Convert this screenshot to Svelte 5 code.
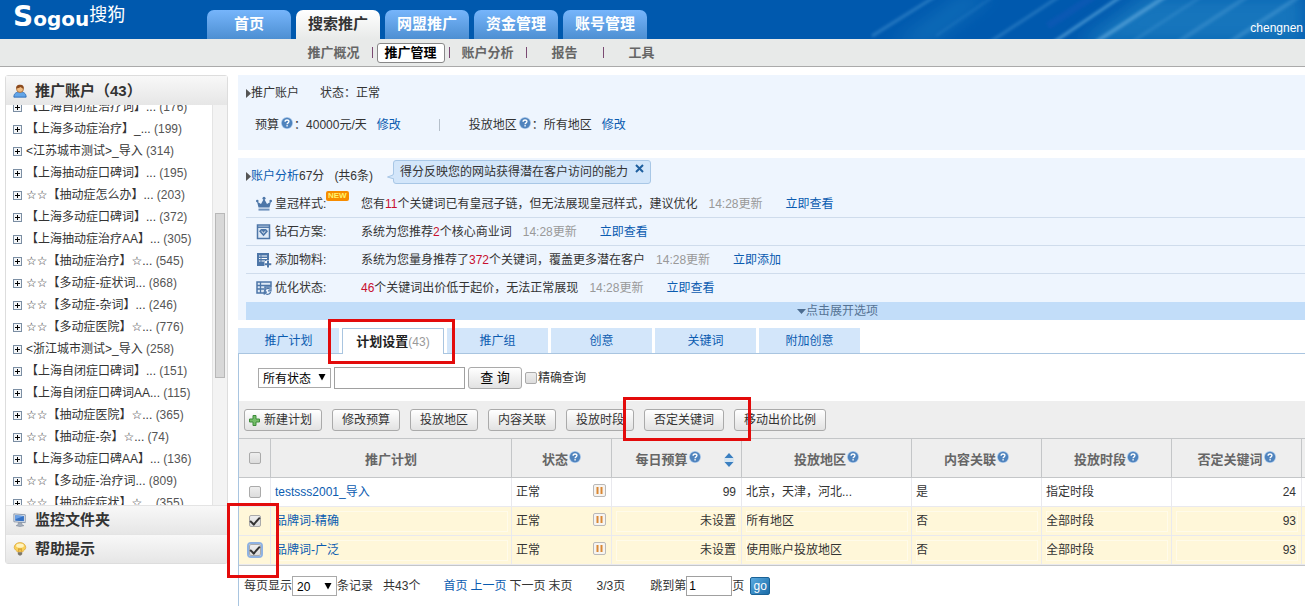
<script lang="ts">
  const mainTabs = ['首页', '搜索推广', '网盟推广', '资金管理', '账号管理'];
  const subTabs = ['推广概况', '推广管理', '账户分析', '报告', '工具'];

  const accounts = [
    { name: '【上海自闭症治疗词】...', count: 176 },
    { name: '【上海多动症治疗】_...', count: 199 },
    { name: '<江苏城市测试>_导入', count: 314 },
    { name: '【上海抽动症口碑词】...', count: 195 },
    { name: '☆☆【抽动症怎么办】...', count: 203 },
    { name: '【上海多动症口碑词】...', count: 372 },
    { name: '【上海抽动症治疗AA】...', count: 305 },
    { name: '☆☆【抽动症治疗】☆...', count: 545 },
    { name: '☆☆【多动症-症状词...', count: 868 },
    { name: '☆☆【多动症-杂词】...', count: 246 },
    { name: '☆☆【多动症医院】☆...', count: 776 },
    { name: '<浙江城市测试>_导入', count: 258 },
    { name: '【上海自闭症口碑词】...', count: 151 },
    { name: '【上海自闭症口碑词AA...', count: 115 },
    { name: '☆☆【抽动症医院】☆...', count: 365 },
    { name: '☆☆【抽动症-杂】☆...', count: 74 },
    { name: '【上海多动症口碑AA】...', count: 136 },
    { name: '☆☆【多动症-治疗词...', count: 809 },
    { name: '☆☆【抽动症症状】☆...', count: 355 },
  ];

  const tips = [
    { icon: 'crown', label: '皇冠样式:', isNew: true, before: '您有', num: 11, after: '个关键词已有皇冠子链，但无法展现皇冠样式，建议优化', link: '立即查看' },
    { icon: 'diamond', label: '钻石方案:', isNew: false, before: '系统为您推荐', num: 2, after: '个核心商业词', link: '立即查看' },
    { icon: 'add', label: '添加物料:', isNew: false, before: '系统为您量身推荐了', num: 372, after: '个关键词，覆盖更多潜在客户', link: '立即添加' },
    { icon: 'state', label: '优化状态:', isNew: false, before: '', num: 46, after: '个关键词出价低于起价，无法正常展现', link: '立即查看' },
  ];

  const planTabs = ['推广计划', '计划设置', '推广组', '创意', '关键词', '附加创意'];
  const actions = ['修改预算', '投放地区', '内容关联', '投放时段', '否定关键词', '移动出价比例'];

  let rows = $state([
    { name: 'testsss2001_导入', budget: '99', region: '北京，天津，河北...', related: '是', period: '指定时段', negative: 24, checked: false },
    { name: '品牌词-精确', budget: '未设置', region: '所有地区', related: '否', period: '全部时段', negative: 93, checked: true },
    { name: '品牌词-广泛', budget: '未设置', region: '使用账户投放地区', related: '否', period: '全部时段', negative: 93, checked: true },
  ]);
  let page = $state('1');
</script>

{#snippet help()}
  <svg class="help" width="12" height="12" viewBox="0 0 12 12" aria-hidden="true">
    <circle cx="6" cy="6" r="6" fill="#a9c8ea" />
    <circle cx="6" cy="6" r="5.2" fill="#4f83bd" />
    <path d="M4.1 4.8C4.1 2.3 8 2.4 7.9 4.7C7.8 5.9 6.1 5.8 6.1 7.2" fill="none" stroke="#fff" stroke-width="1.4" />
    <rect x="5.4" y="8.1" width="1.4" height="1.4" fill="#fff" />
  </svg>
{/snippet}

{#snippet triangle()}
  <svg class="arrow" width="8" height="7" viewBox="0 0 8 7" aria-hidden="true"><path d="M.5 0H7.5L4 6.5Z" fill="#000" /></svg>
{/snippet}

<div class="page">
  <header>
    <svg class="streaks" width="435" height="39" viewBox="0 0 435 39" aria-hidden="true">
      <defs>
        <filter id="soft"><feGaussianBlur stdDeviation="1.6" /></filter>
        <filter id="wide" x="-20%" width="140%"><feGaussianBlur stdDeviation="9" /></filter>
      </defs>
      <path d="M205 45L275 -6H435V45Z" fill="#2484c4" opacity=".65" filter="url(#wide)" />
      <path d="M20 45L90 -6H125L60 45Z" fill="#2484c4" opacity=".4" filter="url(#wide)" />
      <g stroke="#6db4e4" filter="url(#soft)">
        <path d="M2 36L66 -4" stroke-width="3" opacity=".35" />
        <path d="M66 36L124 -4" stroke-width="2" opacity=".2" />
        <path d="M120 42L190 -4" stroke-width="3" opacity=".3" />
        <path d="M184 42L252 -4" stroke-width="3" opacity=".6" />
        <path d="M226 42L296 -4" stroke-width="4" opacity=".55" />
        <path d="M262 42L332 -4" stroke-width="3" opacity=".2" />
        <path d="M308 42L378 -4" stroke-width="4" opacity=".25" />
        <path d="M360 42L430 -4" stroke-width="4" opacity=".3" />
      </g>
      <path d="M178 26L224 -4" stroke="#2458c0" stroke-width="7" opacity=".3" filter="url(#soft)" />
    </svg>
    <a class="logo" href="#home"><b><big>S</big>ogou</b><span>搜狗</span></a>
    <nav class="main-tabs">
      {#each mainTabs as tab, i}
        <a href="#main{i}" class:active={i === 1}>{tab}</a>
      {/each}
    </nav>
    <span class="user">chengnen</span>
  </header>

  <nav class="sub-tabs">
    {#each subTabs as tab, i}
      <div class="sub-cell"><a href="#sub{i}" class:active={i === 1}>{tab}</a></div>
    {/each}
  </nav>

  <div class="body">
    <aside>
      <h2>
        <svg width="14" height="16" viewBox="0 0 16 16" aria-hidden="true">
          <path d="M1 15C1 10.5 4 9 8 9S15 10.5 15 15Z" fill="#62a5e8" stroke="#2d6ab5" />
          <circle cx="8" cy="5.6" r="4" fill="#f0bd84" stroke="#9a5a25" stroke-width=".8" />
          <path d="M3.8 5.5C3 1.5 6 .5 8.5 .8C11.5 .8 12.8 3 12.1 5.5C10.5 5 9.5 4.2 8.8 3.5C7.5 4.6 5.5 4.6 3.8 5.5Z" fill="#8c4a1d" />
        </svg>
        推广账户（43）
      </h2>
      <div class="tree">
        <ul>
          {#each accounts as account}
            <li>
              <svg width="9" height="9" viewBox="0 0 9 9" aria-hidden="true">
                <rect x=".5" y=".5" width="8" height="8" fill="#f4f6f8" stroke="#7b8ea3" />
                <path d="M2 4.5H7M4.5 2V7" stroke="#000" />
              </svg>
              <span>{account.name} <i>({account.count})</i></span>
            </li>
          {/each}
        </ul>
        <div class="track"><div class="thumb"></div></div>
      </div>
      <h2>
        <svg width="14" height="16" viewBox="0 0 16 16" aria-hidden="true">
          <path d="M1 1L14 2V11L1 10Z" fill="#e5e9ee" stroke="#8190a5" />
          <path d="M2.5 2.7L12.5 3.4V9.5L2.5 8.8Z" fill="#3572c6" />
          <path d="M2.5 2.7L12.5 3.4L2.5 7Z" fill="#6ca1e6" />
          <path d="M6 11H10V13L12.5 14.5L8 15.5L3.5 14.5L6 13Z" fill="#a5afbc" stroke="#778295" stroke-width=".6" />
        </svg>
        监控文件夹
      </h2>
      <h2>
        <svg width="14" height="16" viewBox="0 0 16 16" aria-hidden="true">
          <path d="M8 .7C3.8 .7 1.4 3.5 1.4 6.2C1.4 8.8 4.2 9.6 5.2 11.5H10.8C11.8 9.6 14.6 8.8 14.6 6.2C14.6 3.5 12.2 .7 8 .7Z" fill="#f9cf55" stroke="#d9a33a" stroke-width=".8" />
          <ellipse cx="8" cy="4.2" rx="4.4" ry="2.4" fill="#fff3bf" />
          <path d="M6.5 11V7.5L8 8.5L9.5 7.5V11" fill="none" stroke="#b97b1e" stroke-width=".7" />
          <path d="M5.5 11.8H10.5V14L9 15.5H7L5.5 14Z" fill="#7d7768" />
        </svg>
        帮助提示
      </h2>
    </aside>

    <main>
      <section class="account">
        <div class="line top"><svg width="5" height="9" viewBox="0 0 5 9" aria-hidden="true"><path d="M0 0L5 4.5L0 9Z" fill="#555" /></svg>推广账户<span class="status">状态：正常</span></div>
        <div class="line detail">
          <span>预算{@render help()}：</span><span>40000元/天</span><a href="#budget">修改</a>
          <span class="divider"></span>
          <span>投放地区{@render help()}：</span><span>所有地区</span><a href="#region">修改</a>
        </div>
      </section>

      <section class="analysis">
        <div class="line score">
          <svg width="5" height="9" viewBox="0 0 5 9" aria-hidden="true"><path d="M0 0L5 4.5L0 9Z" fill="#555" /></svg><a href="#analysis">账户分析</a>67分<span class="total">(共6条)</span>
          <div class="bubble">
            <svg class="tail" width="7" height="9" viewBox="0 0 7 9" aria-hidden="true"><path d="M7 .5L6 4L.5 6L7 8" fill="#d3e6fa" stroke="#a8c7e6" /></svg>
            得分反映您的网站获得潜在客户访问的能力
            <button class="close" aria-label="关闭"><svg width="9" height="9" viewBox="0 0 9 9"><path d="M1 1L8 8M8 1L1 8" stroke="#1f5f9e" stroke-width="2" /></svg></button>
          </div>
        </div>
        {#each tips as tip}
          <div class="tip">
            <div class="tip-label">
              <svg width="16" height="16" viewBox="0 0 16 16" aria-hidden="true">
                {#if tip.icon === 'crown'}
                  <path d="M2.5 11.5L1 5.5L5 8L8 2.5L11 8L15 5.5L13.5 11.5Z" fill="#4d76a8" />
                  <circle cx="1.3" cy="5" r="1.3" fill="#4d76a8" /><circle cx="8" cy="2.3" r="1.5" fill="#4d76a8" /><circle cx="14.7" cy="5" r="1.3" fill="#4d76a8" />
                  <rect x="2.5" y="12.6" width="11" height="2" fill="#6f92bd" />
                {:else if tip.icon === 'diamond'}
                  <rect x="1.5" y="1" width="12" height="13.5" fill="#dfeaf6" stroke="#4d76a8" stroke-width="1.5" />
                  <path d="M1 3.2H14" stroke="#4d76a8" stroke-width="1.5" />
                  <path d="M3 7.2L5 5H10L12 7.2L7.5 12.2Z" fill="#4d76a8" />
                  <path d="M5.5 7.2L7.5 9L9.5 7.2" fill="none" stroke="#fff" />
                {:else if tip.icon === 'add'}
                  <path d="M1 1H13V9H9V14H1Z" fill="#4d76a8" />
                  <path d="M3 4H4.5M5.5 4H11M3 6.5H4.5M5.5 6.5H11M3 9H4.5M5.5 9H9" stroke="#fff" />
                  <path d="M12 8.5V15.5M8.5 12H15.5" stroke="#fff" stroke-width="4" />
                  <path d="M12 9V15.5M8.8 12.2H15.3" stroke="#4d76a8" stroke-width="2" />
                {:else}
                  <path d="M1 2H15V7H9V13H1Z" fill="#dfeaf6" stroke="#4d76a8" stroke-width="1.5" />
                  <path d="M1 5.5H15M1 9H8M4.5 2V13" stroke="#4d76a8" stroke-width="1.3" />
                  <path d="M8.6 10.8C9.2 8.3 12.5 7.8 14 9.4M15 8V10.8H12M14.6 12C14 14.5 10.8 15 9.2 13.4M8.2 14.8V12.2H11" fill="none" stroke="#4d76a8" stroke-width="1.2" />
                {/if}
              </svg>
              {tip.label}
              {#if tip.isNew}<b class="new">NEW</b>{/if}
            </div>
            <span>{tip.before}<em>{tip.num}</em>{tip.after}</span>
            <span class="time">14:28更新</span>
            <a href="#tip-{tip.icon}">{tip.link}</a>
          </div>
        {/each}
        <button class="expand"><svg width="9" height="5" viewBox="0 0 9 5" aria-hidden="true"><path d="M0 0H9L4.5 5Z" fill="#4c6c90" /></svg>点击展开选项</button>
      </section>

      <nav class="plan-tabs">
        {#each planTabs as tab, i}
          {#if i === 1}
            <a href="#plan{i}" class="active"><b>{tab}</b>(43)<span class="mark mark-tab"></span></a>
          {:else}
            <a href="#plan{i}">{tab}</a>
          {/if}
        {/each}
      </nav>

      <div class="plans">
        <form class="filter">
          <span class="select">
            <select class="state" aria-label="状态"><option>所有状态</option></select>
            {@render triangle()}
          </span>
          <input class="keyword" type="text" aria-label="关键字" />
          <button type="button" class="btn query">查 询</button>
          <label><input type="checkbox" />精确查询</label>
        </form>

        <div class="toolbar">
          <button class="btn create">
            <svg width="11" height="11" viewBox="0 0 11 11" aria-hidden="true"><path d="M4 .5H7V4H10.5V7H7V10.5H4V7H.5V4H4Z" fill="#74bd68" stroke="#3d8b3a" /></svg>新建计划
          </button>
          {#each actions as action, i}
            <button class="btn">{action}{#if i === 4}<span class="mark mark-action"></span>{/if}</button>
          {/each}
        </div>

        <table>
          <colgroup>
            <col class="w-check" /><col class="w-plan" /><col class="w-state" /><col class="w-mid" /><col class="w-region" /><col class="w-mid" /><col class="w-mid" /><col class="w-mid" /><col />
          </colgroup>
          <thead>
            <tr>
              <th class="check"><input type="checkbox" aria-label="全选" /></th>
              <th>推广计划</th>
              <th>状态{@render help()}</th>
              <th>
                <div class="sortable">
                  <span>每日预算{@render help()}</span>
                  <svg width="10" height="14" viewBox="0 0 10 14" aria-hidden="true">
                    <path d="M.5 5L5 0L9.5 5ZM.5 9L5 14L9.5 9Z" fill="#3b7fc0" />
                    <path d="M0 6H10M0 8H10" stroke="#bcdcf5" />
                  </svg>
                </div>
              </th>
              <th>投放地区{@render help()}</th>
              <th>内容关联{@render help()}</th>
              <th>投放时段{@render help()}</th>
              <th>否定关键词{@render help()}</th>
              <th></th>
            </tr>
          </thead>
          <tbody>
            {#each rows as row, i}
              <tr class:checked={row.checked}>
                <td class="check" class:focused={i === 2}>
                  <input type="checkbox" aria-label={row.name} bind:checked={row.checked} />
                  {#if i === 1}<span class="mark mark-check"></span>{/if}
                </td>
                <td class="framed"><a href="#row{i}">{row.name}</a></td>
                <td>
                  <div class="state-cell">
                    正常
                    <button aria-label="暂停">
                      <svg width="13" height="13" viewBox="0 0 13 13">
                        <rect x=".5" y=".5" width="12" height="12" rx="1.5" fill="#f7f4f0" stroke="#b9b9b9" />
                        <path d="M4.5 3V10M8.5 3V10" stroke="#d98734" stroke-width="2" />
                      </svg>
                    </button>
                  </div>
                </td>
                <td class="framed num">{row.budget}</td>
                <td class="framed">{row.region}</td>
                <td class="framed">{row.related}</td>
                <td class="framed">{row.period}</td>
                <td class="framed num">{row.negative}</td>
                <td></td>
              </tr>
            {/each}
          </tbody>
        </table>

        <div class="pager">
          <label>每页显示<span class="select"><select class="size"><option>20</option></select>{@render triangle()}</span>条记录</label>
          <span class="sum">共43个</span>
          <span class="links"><a href="#first">首页</a><a href="#prev">上一页</a><span>下一页</span><span>末页</span></span>
          <span class="pos">3/3页</span>
          <label>跳到第<input class="jump" type="text" bind:value={page} />页</label>
          <button class="go">go</button>
        </div>
      </div>
    </main>
  </div>
</div>

<style>
  :global(body) {
    background: #fff;
  }

  .page {
    overflow: hidden;
    font: 12px/20px "Liberation Sans", "DejaVu Sans", "Noto Sans CJK SC", sans-serif;
    color: #333;
    white-space: nowrap;
  }

  .page * {
    box-sizing: border-box;
  }

  a {
    color: #0a5bb0;
    text-decoration: none;
  }

  svg {
    flex-shrink: 0;
  }

  button, input, select {
    font: inherit;
    margin: 0;
  }

  header {
    position: relative;
    display: flex;
    height: 39px;
    background: #0059ae;
  }

  .streaks {
    position: absolute;
    top: 0;
    right: 0;
  }

  .logo {
    display: flex;
    width: 207px;
    padding-left: 13px;
    color: #fff;
  }

  .logo b {
    font: bold 20px/38px "DejaVu Sans", sans-serif;
  }

  .logo big {
    font-size: 28px;
    line-height: 20px;
  }

  .logo span {
    font-size: 18px;
    line-height: 31px;
  }

  .main-tabs {
    display: flex;
    gap: 5px;
    padding-top: 10px;
  }

  .main-tabs a {
    width: 84px;
    border-radius: 7px 7px 0 0;
    background: linear-gradient(#76b5fb, #4d8fd2);
    color: #fff;
    font-size: 15px;
    font-weight: bold;
    line-height: 28px;
    text-align: center;
  }

  .main-tabs .active {
    background: linear-gradient(#fff, #e8eae9);
    color: #333;
  }

  .user {
    position: relative;
    margin-left: auto;
    padding: 18px 2px 0 0;
    color: #fff;
  }

  .sub-tabs {
    display: flex;
    height: 28px;
    padding-left: 295px;
    border-bottom: 1px solid #aaa;
    background: #e8eae9;
  }

  .sub-cell {
    position: relative;
    display: flex;
    align-items: center;
    justify-content: center;
    width: 77px;
  }

  .sub-cell:not(:last-child)::after {
    content: '';
    position: absolute;
    right: -1px;
    width: 1px;
    height: 11px;
    background: #7a4a72;
  }

  .sub-cell a {
    color: #666;
    font-size: 13px;
    font-weight: bold;
  }

  .sub-cell .active {
    width: 68px;
    border: 1px solid #888;
    border-radius: 3px;
    background: #fff;
    color: #000;
    line-height: 18px;
    text-align: center;
  }

  .body {
    display: flex;
    align-items: flex-start;
    gap: 10px;
    padding: 8px 0 0 5px;
  }

  aside {
    width: 223px;
    flex-shrink: 0;
    border: 1px solid #ddd;
    border-radius: 3px;
  }

  h2 {
    display: flex;
    align-items: center;
    gap: 8px;
    height: 29px;
    margin: 0;
    padding-left: 7px;
    border-top: 1px solid #e4e4e4;
    background: linear-gradient(#f8f8f8, #e6e6e6);
    font-size: 15px;
    font-weight: bold;
  }

  h2:first-child {
    border-top: 0;
  }

  .tree {
    display: flex;
    height: 400px;
    overflow: hidden;
  }

  ul {
    flex: 1;
    margin: -9px 0 0;
    padding: 0 0 0 7px;
    list-style: none;
  }

  li {
    display: flex;
    align-items: center;
    gap: 4px;
    height: 22px;
  }

  li i {
    font-style: normal;
    color: #555;
  }

  .track {
    width: 15px;
    padding: 108px 2px 0;
    border-left: 1px solid #e4e4e4;
    background: #f3f3f3;
  }

  .thumb {
    height: 165px;
    border: 1px solid #b8b8b8;
    background: #d8d8d8;
  }

  main {
    flex: 1;
    min-width: 0;
  }

  .line {
    display: flex;
    align-items: center;
    height: 24px;
  }

  .account {
    padding: 6px 0 13px 8px;
    background: #eef5fe;
  }

  .status {
    margin-left: 21px;
  }

  .detail {
    margin-top: 8px;
    padding-left: 9px;
  }

  .detail a {
    margin-left: 10px;
  }

  .help {
    margin: 0 0 0 1px;
    vertical-align: 0;
  }

  .detail .help {
    margin: 0 1px 0 2px;
  }

  .divider {
    width: 1px;
    height: 12px;
    margin: 0 29px 0 38px;
    background: #b5bfca;
  }

  .analysis {
    margin-top: 8px;
    padding-left: 8px;
    background: #eef5fe;
  }

  .score {
    height: 32px;
    padding-top: 4px;
  }

  .total {
    margin-left: 10px;
  }

  .bubble {
    position: relative;
    display: flex;
    align-items: center;
    gap: 7px;
    height: 24px;
    margin: -9px 0 0 20px;
    padding: 0 6px;
    border: 1px solid #a8c7e6;
    border-radius: 3px;
    background: #d3e6fa;
  }

  .tail {
    position: absolute;
    left: -7px;
    top: 10px;
  }

  .close {
    display: flex;
    padding: 0 0 6px;
    border: 0;
    background: none;
  }

  .tip {
    display: flex;
    align-items: center;
    height: 28px;
    border-bottom: 1px solid #cfdcec;
  }

  .tip:nth-last-child(2) {
    border-bottom: 0;
  }

  .tip-label {
    position: relative;
    display: flex;
    align-items: center;
    gap: 3px;
    width: 115px;
    padding-left: 10px;
  }

  .new {
    position: absolute;
    left: 80px;
    top: -3px;
    padding: 0 2px;
    border-radius: 2px;
    background: #f78c00;
    color: #fff36a;
    font-size: 8px;
    line-height: 10px;
  }

  em {
    font-style: normal;
    color: #c8102e;
  }

  .time {
    margin: 0 23px 0 11px;
    color: #999;
  }

  .expand {
    display: flex;
    align-items: center;
    justify-content: center;
    width: 100%;
    height: 18px;
    padding: 0 0 0 124px;
    border: 0;
    background: #c2ddf9;
    color: #557394;
  }

  .plan-tabs {
    display: flex;
    gap: 3px;
    height: 26px;
    margin-top: 8px;
    border-bottom: 1px solid #a9c5e0;
  }

  .plan-tabs a {
    width: 101px;
    background: #d3e6fa;
    line-height: 27px;
    text-align: center;
  }

  .plan-tabs .active {
    position: relative;
    width: 102px;
    height: 26px;
    border: 1px solid #a9c5e0;
    border-bottom: 0;
    background: #fff;
    color: #999;
    line-height: 25px;
  }

  .active b {
    color: #222;
    font-size: 13px;
  }

  .mark {
    position: absolute;
    z-index: 2;
    border: 3px solid #e30b0b;
    pointer-events: none;
  }

  .mark-tab {
    inset: -10px -12px -10px -15px;
  }

  .mark-action {
    inset: -13px -28px -11px -22px;
  }

  .mark-check {
    left: -12px;
    top: -4px;
    width: 52px;
    height: 75px;
  }

  .plans {
    border-left: 1px solid #a9c5e0;
  }

  .filter {
    display: flex;
    align-items: center;
    gap: 3px;
    height: 47px;
    padding-left: 19px;
  }

  .select {
    position: relative;
    display: inline-flex;
    align-items: center;
  }

  select {
    height: 20px;
    padding: 0 4px;
    border: 1px solid #a9a9a9;
    border-radius: 0;
    appearance: none;
    background: #fff;
    color: #000;
  }

  .arrow {
    position: absolute;
    right: 5px;
    pointer-events: none;
  }

  .state {
    width: 73px;
  }

  .size {
    width: 45px;
  }

  .keyword, .jump {
    height: 22px;
    padding: 0 2px;
    border: 1px solid #a0a0a0;
    background: #fff;
    color: #000;
  }

  .keyword {
    width: 131px;
  }

  .btn {
    position: relative;
    display: flex;
    align-items: center;
    height: 22px;
    padding: 0 9px;
    border: 1px solid #aaa;
    border-radius: 3px;
    background: linear-gradient(#fff, #e2e2e2);
    color: #333;
  }

  .query {
    width: 54px;
    justify-content: center;
    padding: 0;
    color: #000;
    font-size: 13px;
  }

  label {
    display: flex;
    align-items: center;
  }

  input[type='checkbox'] {
    display: grid;
    place-items: center;
    width: 12px;
    height: 12px;
    border: 1px solid #aaa;
    border-radius: 2px;
    appearance: none;
    background: linear-gradient(#eee, #dcdcdc);
  }

  input[type='checkbox']:checked::after {
    content: '';
    width: 8px;
    height: 4px;
    margin-bottom: 3px;
    border: solid #333;
    border-width: 0 0 2px 2px;
    transform: rotate(-48deg);
  }

  .filter label {
    gap: 1px;
  }

  .toolbar {
    display: flex;
    gap: 10px;
    padding: 8px 0 7px 5px;
    background: #eee;
  }

  .create {
    gap: 4px;
    padding-left: 4px;
  }

  table {
    width: 100%;
    table-layout: fixed;
    border-collapse: separate;
    border-spacing: 0;
    border-bottom: 1px solid #c4c6c8;
  }

  .w-check { width: 32px; }
  .w-plan { width: 241px; }
  .w-state { width: 100px; }
  .w-mid { width: 130px; }
  .w-region { width: 170px; }

  th {
    height: 40px;
    padding: 4px 0 0;
    border: solid #c4c6c8;
    border-width: 1px 1px 1px 0;
    background: #eee;
    color: #666;
    font-size: 13px;
    text-align: center;
  }

  th .help {
    vertical-align: 1px;
  }

  th:last-child, td:last-child {
    border-right: 0;
  }

  .sortable {
    display: flex;
    align-items: center;
    padding-right: 7px;
  }

  .sortable span {
    flex: 1;
  }

  td {
    height: 29px;
    padding: 0 5px 0 4px;
    border-right: 1px solid #e9e9ee;
    border-bottom: 1px solid #e9e9ee;
  }

  .checked td {
    background: #fff7d9;
  }

  .checked .framed {
    outline: 1px solid #fffbea;
    outline-offset: -5px;
  }

  .check {
    position: relative;
    padding: 0 0 0 10px;
  }

  .focused input {
    outline: 2px solid #8fb2e2;
  }

  .num {
    text-align: right;
  }

  .state-cell {
    display: flex;
    align-items: center;
    justify-content: space-between;
  }

  .state-cell button {
    display: flex;
    padding: 0 0 3px;
    border: 0;
    background: none;
  }

  .pager {
    display: flex;
    align-items: center;
    height: 40px;
    padding-left: 5px;
  }

  .sum {
    margin: 0 23px 0 10px;
  }

  .links {
    display: flex;
    gap: 3px;
  }

  .pos {
    margin: 0 25px 0 24px;
  }

  .jump {
    width: 46px;
    height: 20px;
  }

  .go {
    width: 20px;
    height: 18px;
    margin-left: 6px;
    padding: 0;
    border: 1px solid #1a6296;
    border-radius: 2px;
    background: linear-gradient(135deg, #5aaae0, #1a6ca8);
    color: #fff;
    line-height: 14px;
  }
</style>
